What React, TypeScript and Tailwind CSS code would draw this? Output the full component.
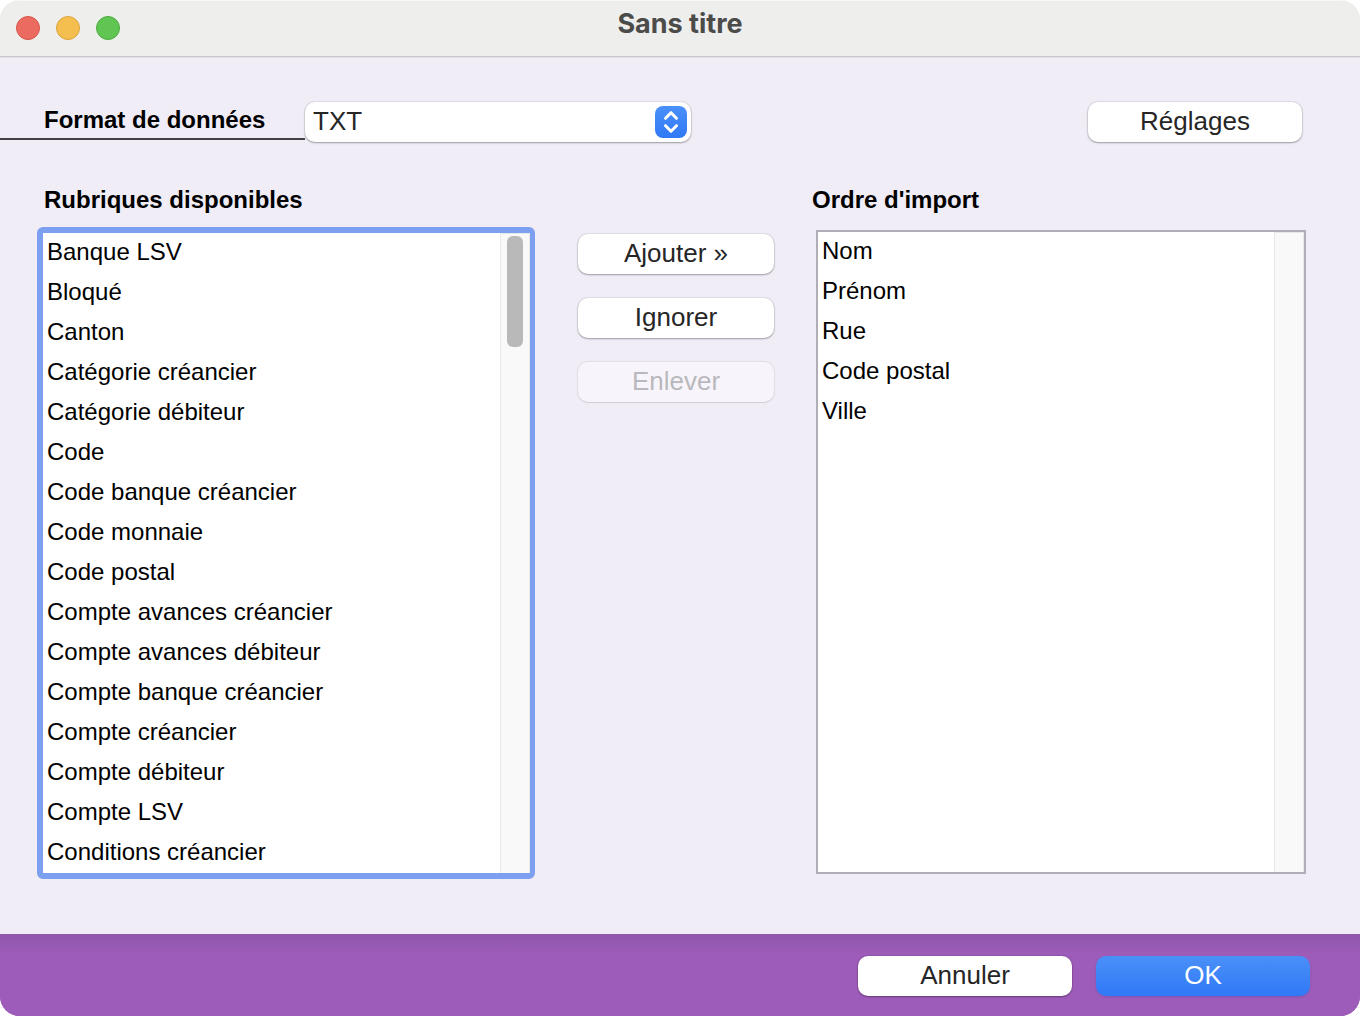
import React, { useState } from "react";
import clsx from "clsx";

const availableFields = [
  "Banque LSV",
  "Bloqué",
  "Canton",
  "Catégorie créancier",
  "Catégorie débiteur",
  "Code",
  "Code banque créancier",
  "Code monnaie",
  "Code postal",
  "Compte avances créancier",
  "Compte avances débiteur",
  "Compte banque créancier",
  "Compte créancier",
  "Compte débiteur",
  "Compte LSV",
  "Conditions créancier",
];

const importFields = ["Nom", "Prénom", "Rue", "Code postal", "Ville"];

type ButtonProps = React.ButtonHTMLAttributes<HTMLButtonElement> & {
  primary?: boolean;
};

const Button: React.FC<ButtonProps> = ({ primary, className, ...props }) => (
  <button
    type="button"
    className={clsx(
      "h-10 rounded-[10px] pb-[2px] text-[26px] leading-[38px]",
      primary
        ? "bg-linear-to-b from-[#4a90f8] to-[#3078f6] text-white shadow-[0_1px_2px_rgba(60,60,160,0.3)]"
        : "bg-white text-[#262626] shadow-[0_0_1px_1px_rgba(0,0,0,0.07),0_1px_2px_rgba(0,0,0,0.3)]",
      "disabled:bg-[#f7f5fb] disabled:text-[#b9b8bc] disabled:shadow-[0_0_1px_1px_rgba(0,0,0,0.06),0_1px_1px_rgba(0,0,0,0.08)]",
      className
    )}
    {...props}
  />
);

type FieldListProps = {
  id: string;
  fields: string[];
  thumb?: boolean;
};

const FieldList: React.FC<FieldListProps> = ({ id, fields, thumb }) => (
  <div className="flex min-h-[640px] flex-1 bg-white">
    <select
      id={id}
      multiple
      size={16}
      className="min-w-0 flex-1 appearance-none overflow-hidden bg-white text-2xl text-black outline-none"
    >
      {fields.map((field) => (
        <option key={field} value={field} className="h-10 px-1 pt-[5px] pb-0">
          {field}
        </option>
      ))}
    </select>
    <div className="w-[30px] border border-b-0 border-[#e8e8e8] bg-[#f9f9f9] pt-[2px]">
      {thumb && <div className="mx-auto h-[111px] w-4 rounded-md bg-[#b9b9b9]" />}
    </div>
  </div>
);

export default function App() {
  const [format, setFormat] = useState("TXT");

  return (
    <div className="flex min-h-screen flex-col overflow-hidden rounded-[20px] bg-[#f0edf7] font-['Liberation_Sans',Arial,sans-serif] text-black">
      <header className="grid h-[57px] grid-cols-[1fr_auto_1fr] border-b border-[#c6c5ca] bg-[#eeeeec] shadow-[inset_0_1px_0_#f8f8f7,0_1px_0_#e4e2ea]">
        <div className="flex items-center gap-4 pl-4">
          <button type="button" aria-label="Fermer" className="size-6 rounded-full border border-[#d5554b] bg-[#ec6b60]" />
          <button type="button" aria-label="Réduire" className="size-6 rounded-full border border-[#dba33c] bg-[#f5bf4f]" />
          <button type="button" aria-label="Agrandir" className="size-6 rounded-full border border-[#4cab3e] bg-[#61c554]" />
        </div>
        <h1 className="pt-2 font-[Inter,sans-serif] text-[27px] leading-8 font-bold text-[#4b4b4a]">
          Sans titre
        </h1>
      </header>

      <main className="flex flex-1 flex-col pt-[45px] pb-[55px]">
        <div className="flex items-start">
          <div className="flex h-[38px] w-[305px] items-center border-b-2 border-[#434047] pl-11">
            <label htmlFor="format" className="text-2xl leading-7 font-bold">
              Format de données
            </label>
          </div>
          <div className="relative w-[386px]">
            <select
              id="format"
              value={format}
              onChange={(e) => setFormat(e.target.value)}
              className="h-10 w-full appearance-none rounded-[10px] bg-white pb-[2px] pl-2 text-[26px] leading-[38px] text-[#262626] shadow-[0_0_1px_1px_rgba(0,0,0,0.07),0_1px_2px_rgba(0,0,0,0.3)] outline-none"
            >
              <option value="TXT">TXT</option>
            </select>
            <svg
              viewBox="0 0 32 32"
              className="pointer-events-none absolute top-1 right-1 size-8 rounded-lg bg-linear-to-b from-[#4a90f8] to-[#3078f6]"
              fill="none"
              stroke="white"
              strokeWidth="3"
              strokeLinecap="round"
              strokeLinejoin="round"
            >
              <path d="M10.5 12.3 16 6.7l5.5 5.6M10.5 19.7l5.5 5.6 5.5-5.6" />
            </svg>
          </div>
          <Button className="mr-[58px] ml-auto w-[214px]">Réglages</Button>
        </div>

        <div className="mt-11 grid flex-1 grid-cols-[minmax(0,498fr)_197px_minmax(0,490fr)] gap-x-[42px] pr-[54px] pl-[37px]">
          <section className="flex flex-col">
            <label htmlFor="available" className="pl-[7px] text-2xl leading-7 font-bold">
              Rubriques disponibles
            </label>
            <div className="mt-[13px] flex flex-1 rounded-md border-[6px] border-r-[5px] border-[#7c9ff0]">
              <FieldList id="available" fields={availableFields} thumb />
            </div>
          </section>

          <div className="flex flex-col gap-6 pt-12 pl-px">
            <Button>Ajouter »</Button>
            <Button>Ignorer</Button>
            <Button disabled>Enlever</Button>
          </div>

          <section className="flex flex-col pb-[5px]">
            <label htmlFor="order" className="-ml-1 text-2xl leading-7 font-bold">
              Ordre d'import
            </label>
            <div className="mt-4 flex flex-1 border-2 border-[#b0aeb6]">
              <FieldList id="order" fields={importFields} />
            </div>
          </section>
        </div>
      </main>

      <footer className="flex justify-end gap-6 bg-[#9d5cb9] bg-linear-to-b from-[#9057ab] to-[#9d5cb9] to-25% pt-[22px] pr-[50px] pb-5">
        <Button className="w-[214px]">Annuler</Button>
        <Button primary className="w-[214px]">
          OK
        </Button>
      </footer>
    </div>
  );
}
